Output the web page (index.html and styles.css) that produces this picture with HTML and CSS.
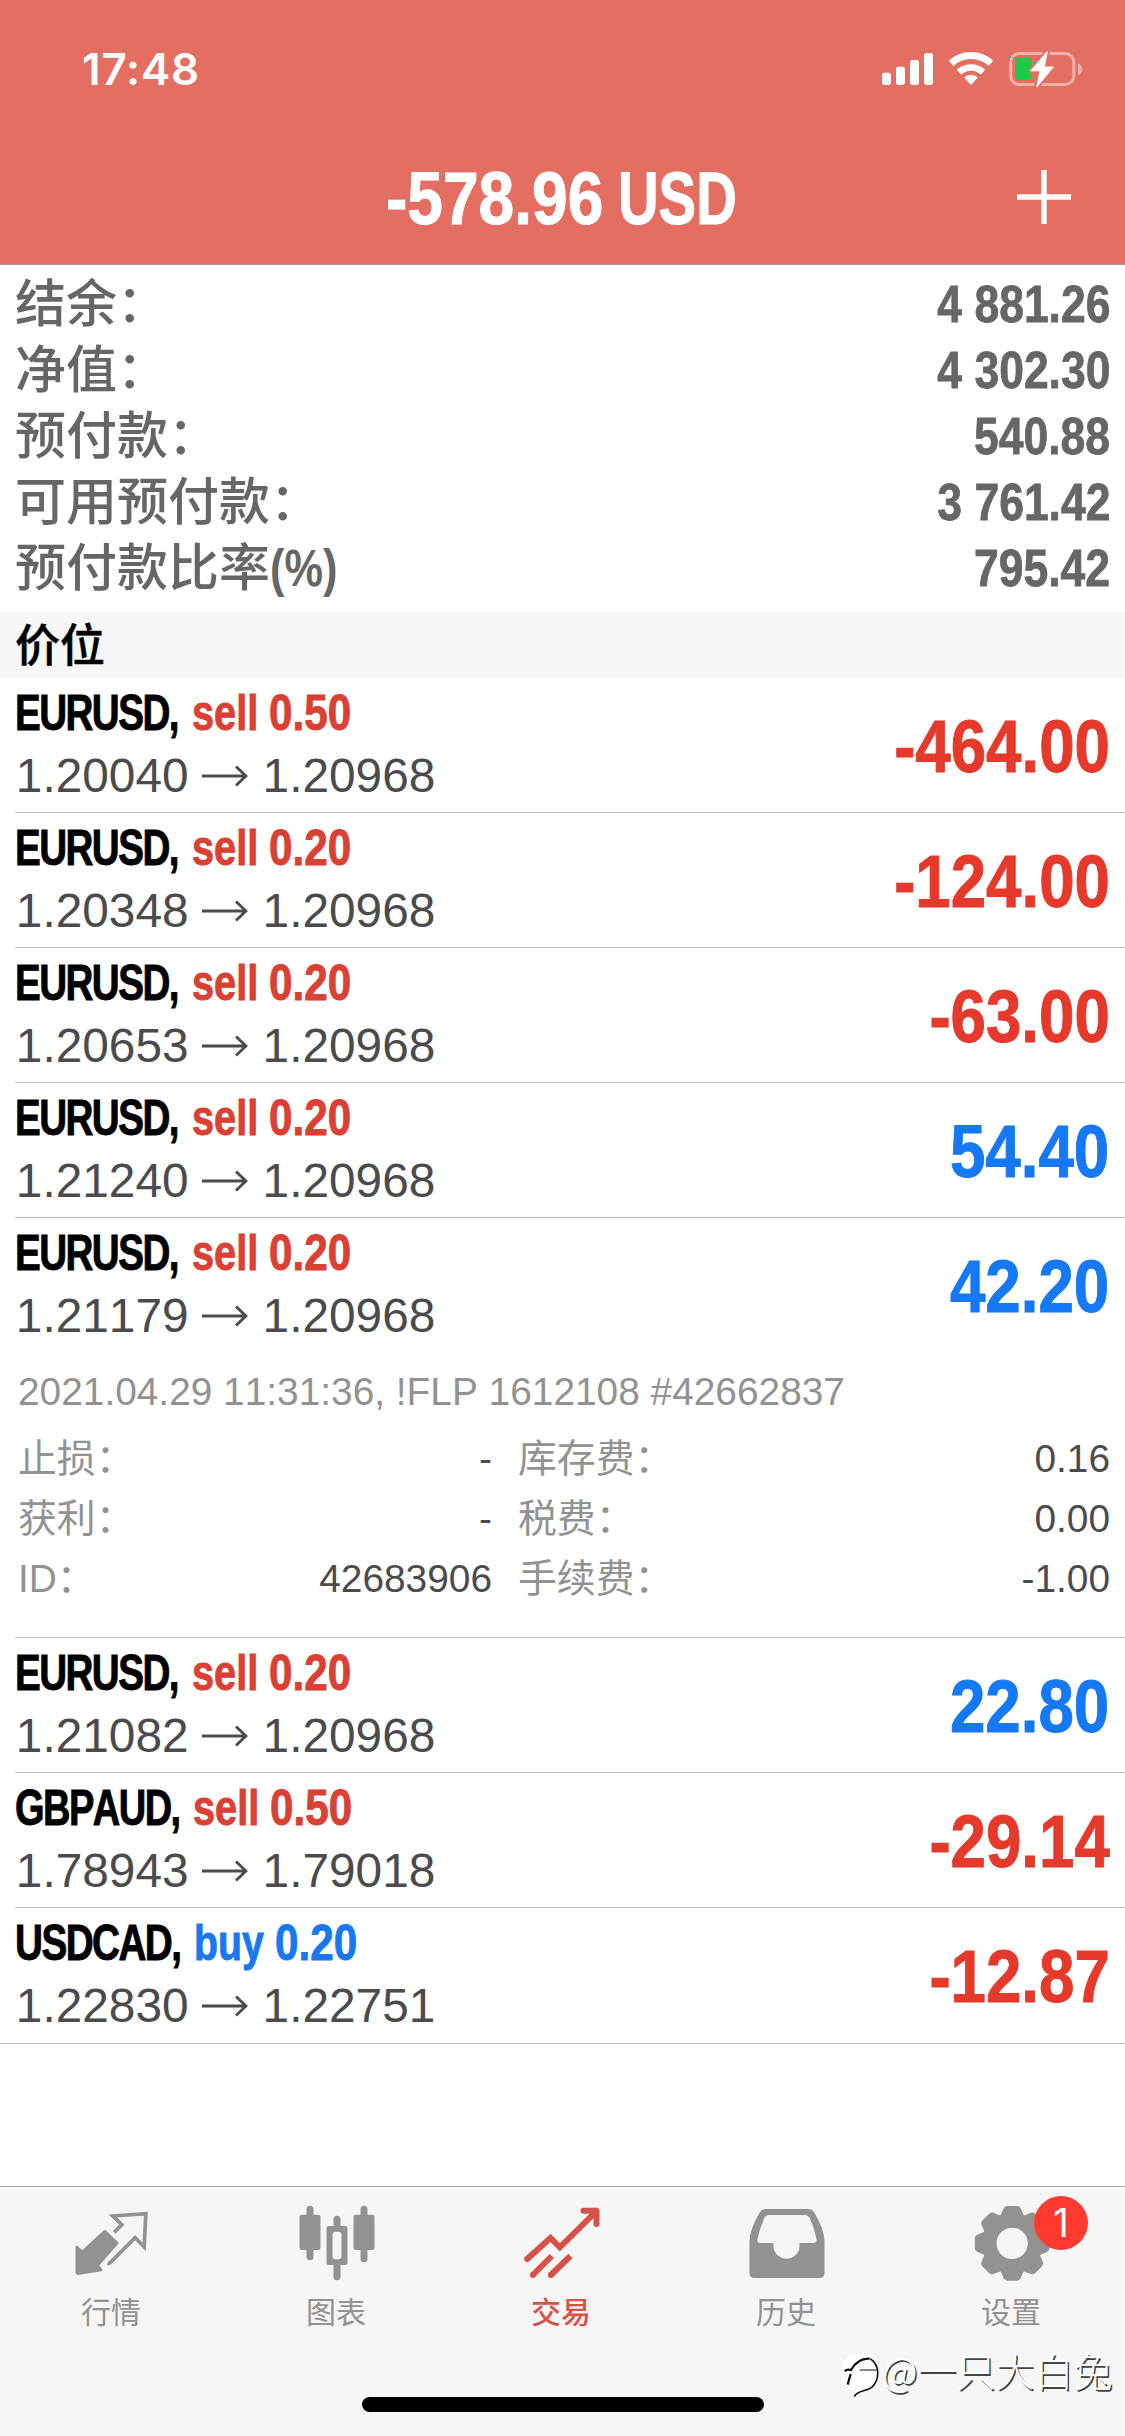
FILE: index.html
```html
<!DOCTYPE html>
<html lang="zh-CN">
<head>
<meta charset="utf-8">
<title>交易</title>
<link rel="stylesheet" href="styles.css">
</head>
<body>
<div class="app">
  <header class="header">
    <div class="status">
      <span class="status__time">17:48</span>
      <svg class="status__icons" width="204" height="42" viewBox="0 0 204 42">
        <g fill="#fff">
          <rect x="2" y="24.7" width="9" height="12.3" rx="2.4"/>
          <rect x="16" y="18.7" width="9" height="18.3" rx="2.4"/>
          <rect x="30" y="12" width="9" height="25" rx="2.4"/>
          <rect x="44" y="5" width="9" height="32" rx="2.4"/>
          <path d="M91 37L84.2 29.6A9.8 9.8 0 0 1 97.800 29.6Z"/>
        </g>
        <g fill="none" stroke="#fff">
          <path stroke-width="7" d="M71.100 15.3A29.5 29.5 0 0 1 110.900 15.3"/>
          <path stroke-width="6.4" d="M79 24.2A17.7 17.7 0 0 1 103 24.2"/>
        </g>
        <rect x="130.800" y="5.5" width="63" height="31" rx="8.5" fill="none" stroke="#f2b1a9" stroke-width="3"/>
        <path d="M198 15.3Q202.300 17.3 202.300 21.3T198 27.3Z" fill="#f2b1a9"/>
        <rect x="135" y="10" width="17" height="22" rx="3" fill="#19cd4a"/>
        <path d="M167.3 3.6L150.7 22.8H160.2L156.7 39L173.4 19H164.2Z" fill="#fff" stroke="#e56e62" stroke-width="5" stroke-linejoin="round" paint-order="stroke"/>
        <path d="M167.3 3.6L150.7 22.8H160.2L156.7 39L173.4 19H164.2Z" fill="#fff" stroke="#fff" stroke-width="1" stroke-linejoin="round"/>
      </svg>
    </div>
    <div class="titlebar">
      <h1 class="titlebar__title"><span class="titlebar__sum">-578.96</span><span class="titlebar__cur">USD</span></h1>
      <svg class="titlebar__add" width="56" height="56" viewBox="0 0 56 56"><path d="M28 1V55M1 28H55" stroke="#fff" stroke-width="5.4"/></svg>
    </div>
  </header>

  <dl class="account">
    <div class="account__row"><dt>结余：</dt><dd>4 881.26</dd></div>
    <div class="account__row"><dt>净值：</dt><dd>4 302.30</dd></div>
    <div class="account__row"><dt>预付款：</dt><dd>540.88</dd></div>
    <div class="account__row"><dt>可用预付款：</dt><dd>3 761.42</dd></div>
    <div class="account__row"><dt>预付款比率<span class="account__pct">(%)</span></dt><dd>795.42</dd></div>
  </dl>

  <h2 class="section">价位</h2>

  <main class="positions">
    <article class="position"><div class="position__main">
      <div class="position__title"><span class="symbol">EURUSD,</span><span class="side">sell</span><span class="volume">0.50</span></div>
      <div class="position__prices"><span>1.20040</span><svg class="arrow" viewBox="0 0 46 22"><path d="M0 11H44M34 1.5L44 11L34 20.5"/></svg><span>1.20968</span></div>
    </div><div class="position__profit">-464.00</div></article>

    <article class="position"><div class="position__main">
      <div class="position__title"><span class="symbol">EURUSD,</span><span class="side">sell</span><span class="volume">0.20</span></div>
      <div class="position__prices"><span>1.20348</span><svg class="arrow" viewBox="0 0 46 22"><path d="M0 11H44M34 1.5L44 11L34 20.5"/></svg><span>1.20968</span></div>
    </div><div class="position__profit">-124.00</div></article>

    <article class="position"><div class="position__main">
      <div class="position__title"><span class="symbol">EURUSD,</span><span class="side">sell</span><span class="volume">0.20</span></div>
      <div class="position__prices"><span>1.20653</span><svg class="arrow" viewBox="0 0 46 22"><path d="M0 11H44M34 1.5L44 11L34 20.5"/></svg><span>1.20968</span></div>
    </div><div class="position__profit">-63.00</div></article>

    <article class="position"><div class="position__main">
      <div class="position__title"><span class="symbol">EURUSD,</span><span class="side">sell</span><span class="volume">0.20</span></div>
      <div class="position__prices"><span>1.21240</span><svg class="arrow" viewBox="0 0 46 22"><path d="M0 11H44M34 1.5L44 11L34 20.5"/></svg><span>1.20968</span></div>
    </div><div class="position__profit is-gain">54.40</div></article>

    <article class="position position--open"><div class="position__main">
      <div class="position__title"><span class="symbol">EURUSD,</span><span class="side">sell</span><span class="volume">0.20</span></div>
      <div class="position__prices"><span>1.21179</span><svg class="arrow" viewBox="0 0 46 22"><path d="M0 11H44M34 1.5L44 11L34 20.5"/></svg><span>1.20968</span></div>
    </div><div class="position__profit is-gain">42.20</div></article>

    <section class="detail">
      <p class="detail__stamp">2021.04.29 11:31:36, !FLP 1612108 #42662837</p>
      <dl class="detail__grid">
        <div><dt>止损：</dt><dd>-</dd></div><div><dt>库存费：</dt><dd>0.16</dd></div>
        <div><dt>获利：</dt><dd>-</dd></div><div><dt>税费：</dt><dd>0.00</dd></div>
        <div><dt>ID：</dt><dd>42683906</dd></div><div><dt>手续费：</dt><dd>-1.00</dd></div>
      </dl>
    </section>

    <article class="position"><div class="position__main">
      <div class="position__title"><span class="symbol">EURUSD,</span><span class="side">sell</span><span class="volume">0.20</span></div>
      <div class="position__prices"><span>1.21082</span><svg class="arrow" viewBox="0 0 46 22"><path d="M0 11H44M34 1.5L44 11L34 20.5"/></svg><span>1.20968</span></div>
    </div><div class="position__profit is-gain">22.80</div></article>

    <article class="position"><div class="position__main">
      <div class="position__title"><span class="symbol symbol--gbpaud">GBPAUD,</span><span class="side">sell</span><span class="volume">0.50</span></div>
      <div class="position__prices"><span>1.78943</span><svg class="arrow" viewBox="0 0 46 22"><path d="M0 11H44M34 1.5L44 11L34 20.5"/></svg><span>1.79018</span></div>
    </div><div class="position__profit">-29.14</div></article>

    <article class="position position--last"><div class="position__main">
      <div class="position__title"><span class="symbol symbol--usdcad">USDCAD,</span><span class="side side--buy">buy</span><span class="volume volume--buy">0.20</span></div>
      <div class="position__prices"><span>1.22830</span><svg class="arrow" viewBox="0 0 46 22"><path d="M0 11H44M34 1.5L44 11L34 20.5"/></svg><span>1.22751</span></div>
    </div><div class="position__profit">-12.87</div></article>
  </main>

  <footer class="footer">
    <nav class="tabs">
      <a class="tab">
        <svg width="100" height="100" viewBox="187.5 60 300 300">
          <path fill="#929292" stroke="#929292" stroke-width="8" stroke-linejoin="round" d="M229 231L245 246L313 184L350 219L291 286L302 300L233 311Q229 311 229 307Z"/>
          <path fill="none" stroke="#929292" stroke-width="11" d="M341 187L364 164L337 138L436 131L431 231L404 203L328 279Q325 281 321 279"/>
        </svg><span>行情</span></a>
      <a class="tab">
        <svg width="100" height="100" viewBox="862.5 60 300 300">
          <g stroke="#929292" stroke-width="21" stroke-linecap="round"><path d="M928.5 118V260M1009.5 148V172M1009.5 284V320M1090.5 118V266"/></g>
          <rect x="897" y="134" width="63" height="106" rx="7" fill="#929292"/>
          <rect x="1059" y="134" width="63" height="106" rx="7" fill="#929292"/>
          <path fill="#929292" fill-rule="evenodd" d="M985 168H1034Q1041 168 1041 175V278Q1041 285 1034 285H985Q978 285 978 278V175Q978 168 985 168ZM1005 185Q996 185 996 195V258Q996 268 1005 268H1014Q1023 268 1023 258V195Q1023 185 1014 185Z"/>
        </svg><span>图表</span></a>
      <a class="tab tab--active">
        <svg width="100" height="100" viewBox="277.5 60 300 300">
          <g fill="none" stroke="#d65148" stroke-width="18" stroke-linecap="round" stroke-linejoin="miter">
            <path d="M320 267L390 204L418 232L524 127"/>
            <path stroke-linejoin="round" d="M489 122H528V162"/>
            <path stroke-linecap="butt" d="M337 315L394 258M391 315L450 258"/>
            <path d="M337 315h.1M391 315h.1"/>
          </g>
        </svg><span>交易</span></a>
      <a class="tab">
        <svg width="100" height="100" viewBox="952.5 60 300 300">
          <path fill="#929292" fill-rule="evenodd" d="M1038 117H1162Q1174 117 1181 127Q1211 178 1212 213V309Q1212 324 1197 324H1002Q987 324 987 309V213Q988 178 1018 127Q1025 117 1038 117ZM1044 135Q1036 135 1032 143Q1019 170 1011 207Q1009 219 1020 219H1059V228A39 38 0 0 0 1137 228V219H1178Q1190 219 1188 207Q1180 170 1167 143Q1163 135 1155 135Z"/>
        </svg><span>历史</span></a>
      <a class="tab">
        <svg width="100" height="100" viewBox="412.5 60 300 300">
          <g transform="translate(560 220)" fill="#929292">
            <circle r="67.5" fill="none" stroke="#929292" stroke-width="41"/>
            <g id="teeth"><path id="tooth" d="M-40 -76Q-34 -82 -28 -99Q-24 -112 -14 -112H14Q24 -112 28 -99Q34 -82 40 -76Z"/>
            <use href="#tooth" transform="rotate(45)"/><use href="#tooth" transform="rotate(90)"/><use href="#tooth" transform="rotate(135)"/></g>
            <use href="#teeth" transform="rotate(180)"/>
          </g>
        </svg><span>设置</span><b class="badge">1</b></a>
    </nav>
    <div class="home"></div>
    <div class="watermark">
      <svg width="42" height="48" viewBox="0 0 126 144">
        <path fill="#fff" d="M60 6C95 6 118 28 118 62C118 104 80 116 50 134C48 124 50 118 52 114C22 112 4 92 4 62C4 28 28 6 60 6Z"/>
        <path fill="none" stroke="#111" stroke-width="7" d="M17 58Q24 50 36 54Q56 18 92 20M35 66L26 98"/>
        <path fill="none" stroke="#111" stroke-width="3" d="M62 54H112"/>
        <path fill="none" stroke="#111" stroke-width="5" d="M94 20C124 42 122 84 98 106C78 120 56 114 46 134"/>
      </svg><span>@一只大白兔</span>
    </div>
  </footer>
</div>
</body>
</html>
```
FILE: styles.css
```css
* { box-sizing: border-box; margin: 0; padding: 0; }

body {
  width: 1125px;
  background: #fff;
  font-family: "Liberation Sans", "Noto Sans CJK SC", sans-serif;
  font-kerning: none;
  white-space: nowrap;
}

.app { display: flex; flex-direction: column; height: 2436px; overflow: hidden; }

/* Header */
.header { height: 265px; background: #e56e62; border-bottom: 1px solid #c08e88; color: #fff; }
.status { display: flex; justify-content: space-between; height: 140px; padding: 44px 41px 0 82px; }
.status__time { font: 600 44px/50px Inter, sans-serif; letter-spacing: .8px; }
.status__icons { margin-top: 4px; }
.titlebar { display: flex; justify-content: space-between; padding: 18px 53px 0 386px; }
.titlebar__title { display: flex; margin-top: 1px; font-size: 74px; line-height: 80px; font-weight: 700; -webkit-text-stroke: 1px; }
.titlebar__sum { width: 232px; transform: scaleX(.866); transform-origin: 0 0; }
.titlebar__cur { width: 119px; transform: scaleX(.76); transform-origin: 0 0; }
.titlebar__add { margin-top: 11px; }

/* Account summary */
.account { height: 347px; padding: 2px 15px 0 15px; color: #666; }
.account__row { display: flex; justify-content: space-between; align-items: baseline; height: 66px; }
.account dt { font: 500 51px/66px "Noto Sans CJK SC", sans-serif; }
.account dd { font-size: 52px; line-height: 58px; font-weight: 700; transform: scaleX(.855); transform-origin: 100% 0; -webkit-text-stroke: .8px; }
.account .account__pct { display: inline-block; font: 700 51px/58px "Liberation Sans", sans-serif; transform: scaleX(.85); transform-origin: 0 0; }

.section { height: 66px; padding-left: 15px; background: #f7f7f7; color: #000; font: 500 45px/62px "Noto Sans CJK SC", sans-serif; -webkit-text-stroke: .5px; }

/* Positions */
.position { display: flex; justify-content: space-between; height: 135px; margin-left: 15px; padding: 7px 15.5px 0 0; border-bottom: 1px solid #bfbfc1; }
.position--open { border-bottom: 0; }
.position--last { height: 136px; margin-left: 0; padding-left: 15px; }
.position__title { display: flex; height: 56px; font-size: 50px; line-height: 56px; font-weight: 700; -webkit-text-stroke: .9px; }
.position__title span { transform-origin: 0 0; }
.symbol { width: 176.5px; letter-spacing: -2px; transform: scaleX(.772); }
.symbol--gbpaud { width: 177.5px; transform: scaleX(.76); }
.symbol--usdcad { width: 179px; transform: scaleX(.774); }
.side { width: 77px; color: #da4034; transform: scaleX(.795); }
.side--buy { width: 80.5px; transform: scaleX(.785); }
.volume { color: #da4034; transform: scaleX(.845); }
.side--buy, .volume--buy { color: #1878f0; }
.position__prices { display: flex; align-items: center; margin: 7px 0 0 .8px; font-size: 47.8px; line-height: 56px; color: #4b4b4d; }
.arrow { width: 46px; height: 22px; margin: 0 14.5px 0 13.5px; fill: none; stroke: currentColor; stroke-width: 2.9; }
.position__profit { margin-top: 22px; font-size: 74px; line-height: 80px; font-weight: 700; color: #e5392b; transform: scaleX(.86); transform-origin: 100% 0; -webkit-text-stroke: 1px; }
.position__profit.is-gain { color: #1578f5; }

/* Expanded position */
.detail { height: 285px; margin-left: 15px; padding: 9px 15px 0 3px; border-bottom: 1px solid #bfbfc1; font-size: 38.85px; line-height: 60px; color: #929292; }
.detail__grid { display: grid; grid-template-columns: 474px 592px; column-gap: 26px; padding-top: 7px; }
.detail__grid div { display: flex; justify-content: space-between; align-items: baseline; height: 60px; }
.detail__grid dt { font-weight: 400; line-height: 60px; }
.detail__grid dd { line-height: 54px; color: #4b4b4d; }

/* Tab bar */
.footer { position: relative; height: 250px; margin-top: auto; background: #f6f6f6; border-top: 1px solid #a9a9a9; }
.tabs { display: grid; grid-template-columns: repeat(5, 225px); padding-top: 3px; }
.tab { position: relative; display: flex; flex-direction: column; align-items: center; color: #929292; font: 400 30px/40px "Noto Sans CJK SC", sans-serif; }
.tab svg { display: block; }
.tab span { margin-right: 3px; }
.tab--active { color: #d65148; font-weight: 500; }
.badge { position: absolute; left: 134px; top: 6px; width: 54px; height: 54px; border-radius: 50%; background: #ff3b30; color: #fff; text-align: center; font: 400 39px/54px Inter, sans-serif; }
.home { width: 402px; height: 15px; margin: 67px 0 0 362px; border-radius: 8px; background: #000; }
.watermark { position: absolute; left: 839px; top: 165px; display: flex; color: #fff; font: 300 39px/50px "Noto Sans CJK SC", sans-serif; text-shadow: 1.5px 1.5px 0 #444; }
.watermark span { line-height: 34px; margin-left: 1px; }
```
